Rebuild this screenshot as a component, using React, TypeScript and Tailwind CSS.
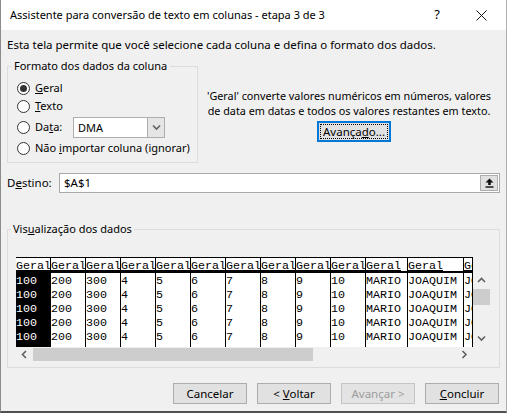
import React from 'react';

// preview grid columns: width in px (7px per monospace char) and the value shown in each row
const columns: { w: number; v: string }[] = [
  { w: 35, v: '100' },
  { w: 35, v: '200' },
  { w: 35, v: '300' },
  { w: 35, v: '4' },
  { w: 35, v: '5' },
  { w: 35, v: '6' },
  { w: 35, v: '7' },
  { w: 35, v: '8' },
  { w: 35, v: '9' },
  { w: 35, v: '10' },
  { w: 42, v: 'MARIO' },
  { w: 56, v: 'JOAQUIM' },
  { w: 56, v: 'JOAQUIM' },
];

const rows = [0, 1, 2, 3, 4];

function Radio({ checked, children }: { checked?: boolean; children: React.ReactNode }) {
  return (
    <div className="flex items-center gap-[5px] whitespace-nowrap">
      <span className="w-[13px] h-[13px] rounded-full border border-[#333] bg-white flex items-center justify-center shrink-0">
        {checked && <span className="w-[7px] h-[7px] rounded-full bg-[#333]" />}
      </span>
      <span>{children}</span>
    </div>
  );
}

function Button({ children, disabled, focused }: { children: React.ReactNode; disabled?: boolean; focused?: boolean }) {
  if (focused) {
    return (
      <div className="w-[74px] h-[21px] border-2 border-[#0078d7] bg-[#e1e1e1] p-[1px]">
        <div className="w-full h-full border border-dotted border-black flex items-center justify-center leading-none">
          <span>{children}</span>
        </div>
      </div>
    );
  }
  return (
    <div
      className={
        disabled
          ? 'w-[74px] h-[21px] border border-[#c4c4c4] bg-[#e3e3e3] text-[#9c9c9c] flex items-center justify-center'
          : 'w-[74px] h-[21px] border border-[#adadad] bg-[#e1e1e1] flex items-center justify-center'
      }
    >
      <span className="whitespace-pre">{children}</span>
    </div>
  );
}

function Chevron({ dir }: { dir: 'up' | 'down' | 'left' | 'right' }) {
  const d = {
    up: 'M1 5 L4.5 1.5 L8 5',
    down: 'M1 1.5 L4.5 5 L8 1.5',
    left: 'M5 1 L1.5 4.5 L5 8',
    right: 'M1.5 1 L5 4.5 L1.5 8',
  }[dir];
  const vertical = dir === 'up' || dir === 'down';
  return (
    <svg width={vertical ? 9 : 7} height={vertical ? 7 : 9} viewBox={vertical ? '0 0 9 7' : '0 0 7 9'}>
      <path d={d} fill="none" stroke="#606060" strokeWidth="1.6" />
    </svg>
  );
}

export default function App() {
  return (
    <div className="w-[507px] h-[413px] flex flex-col bg-[#f0f0f0] border-l border-[#8c8c8c] border-r border-r-[#b0b0b0] border-b-2 border-b-[#505050] font-['Noto_Sans',sans-serif] text-[11.5px] text-black overflow-hidden">
      {/* title bar */}
      <div className="h-[30px] bg-white flex items-center shrink-0">
        <span className="pl-[9px] flex-1 text-[11px]">Assistente para conversão de texto em colunas - etapa 3 de 3</span>
        <span className="w-[14px] text-center text-[13px] mr-[32px]">?</span>
        <svg width="11" height="11" viewBox="0 0 11 11" className="mr-[19px]">
          <path d="M0.5 0.5 L10.5 10.5 M10.5 0.5 L0.5 10.5" stroke="#111" strokeWidth="1" />
        </svg>
      </div>

      <div className="flex-1 flex flex-col pl-[6px] pr-[6px]">
        <p className="pt-[7px] leading-[16px] whitespace-nowrap">
          Esta tela permite que você selecione cada coluna e defina o formato dos dados.
        </p>

        <div className="flex mt-[5px]">
          <fieldset className="w-[191px] shrink-0 border border-[#dcdcdc] pl-[9px] pb-[5px] text-[11px]">
            <legend className="px-[3px] -ml-[6px] leading-[16px]">Formato dos dados da coluna</legend>
            <div className="h-[18px] mt-[5px] flex items-center">
              <Radio checked>
                <u>G</u>eral
              </Radio>
            </div>
            <div className="h-[18px] flex items-center">
              <Radio>
                <u>T</u>exto
              </Radio>
            </div>
            <div className="h-[22px] mt-[1px] flex items-center">
              <Radio>
                <span className="inline-block w-[38px]">
                  Da<u>t</u>a:
                </span>
              </Radio>
              <div className="w-[92px] h-[21px] border border-[#adadad] bg-white flex">
                <span className="flex-1 pl-[4px] leading-[19px]">DMA</span>
                <span className="w-[17px] h-full bg-[#e5e5e5] border-l border-[#adadad] flex items-center justify-center">
                  <Chevron dir="down" />
                </span>
              </div>
            </div>
            <div className="h-[18px] mt-[1px] flex items-center">
              <Radio>
                Não <u>i</u>mportar coluna (ignorar)
              </Radio>
            </div>
          </fieldset>

          <div className="flex-1 flex flex-col items-center pt-[30px] leading-[15px] text-center whitespace-nowrap text-[10.8px]">
            <p>'Geral' converte valores numéricos em números, valores</p>
            <p>de data em datas e todos os valores restantes em texto.</p>
            <div className="mt-[3px] ml-[10px] text-[11.5px]">
              <Button focused>
                Avança<u>d</u>o...
              </Button>
            </div>
          </div>
        </div>

        {/* destination */}
        <div className="flex items-center mt-[10px] h-[20px]">
          <span className="w-[52px]">
            D<u>e</u>stino:
          </span>
          <div className="flex-1 h-[20px] border border-[#a9a9a9] bg-white flex items-center">
            <span className="flex-1 pl-[4px]">$A$1</span>
            <span className="w-[18px] h-[16px] mr-[1px] bg-[#e1e1e1] border border-[#adadad] flex items-center justify-center">
              <svg width="9" height="10" viewBox="0 0 9 10">
                <path d="M4.5 0.5 L8.5 4.5 H5.8 V7 H3.2 V4.5 H0.5 Z" fill="#111" />
                <rect x="0.5" y="8.3" width="8" height="1.4" fill="#111" />
              </svg>
            </span>
          </div>
        </div>

        {/* data preview */}
        <fieldset className="mt-[28px] border border-[#dcdcdc] pl-[8px] pb-[5px]">
          <legend className="px-[2px] -ml-[5px] leading-[16px] text-[11px]">
            Vis<u>u</u>alização dos dados
          </legend>
          <div className="mt-[20px] w-[474px] flex flex-col">
            <div className="flex">
              <div className="w-[457px] h-[90px] border-t border-r border-black overflow-hidden flex font-['Liberation_Mono',monospace] text-[11.67px]">
                {columns.map((c, i) => (
                  <div key={i} className="shrink-0 flex flex-col border-r border-black whitespace-pre" style={{ width: c.w }}>
                    <div className="h-[15px] border-b-2 border-black leading-[12px] pt-[2px] bg-white">
                      <u>Geral</u>
                    </div>
                    <div className={i === 0 ? 'flex-1 bg-black text-white pt-[1px]' : 'flex-1 bg-white pt-[1px]'}>
                      {rows.map((r) => (
                        <div key={r} className="h-[14px] leading-[14px]">
                          {c.v}
                        </div>
                      ))}
                    </div>
                  </div>
                ))}
              </div>
              {/* vertical scrollbar */}
              <div className="w-[17px] flex flex-col">
                <div className="h-[15px]" />
                <div className="flex-1 flex flex-col items-center">
                  <div className="h-[17px] w-full flex items-center justify-center">
                    <Chevron dir="up" />
                  </div>
                  <div className="h-[16px] w-[17px] bg-[#cdcdcd]" />
                  <div className="flex-1" />
                  <div className="h-[17px] w-full flex items-center justify-center">
                    <Chevron dir="down" />
                  </div>
                </div>
              </div>
            </div>
            {/* horizontal scrollbar */}
            <div className="flex h-[15px] w-[457px] items-center">
              <div className="w-[17px] flex justify-center">
                <Chevron dir="left" />
              </div>
              <div className="w-[280px] h-[13px] bg-[#cdcdcd]" />
              <div className="flex-1" />
              <div className="w-[17px] flex justify-center">
                <Chevron dir="right" />
              </div>
            </div>
          </div>
        </fieldset>

        {/* wizard buttons */}
        <div className="flex justify-end gap-[10px] mt-[15px] pr-[1px]">
          <Button>Cancelar</Button>
          <Button>
            &lt; <u>V</u>oltar
          </Button>
          <Button disabled>Avançar &gt;</Button>
          <Button>
            <u>C</u>oncluir
          </Button>
        </div>
      </div>
    </div>
  );
}
